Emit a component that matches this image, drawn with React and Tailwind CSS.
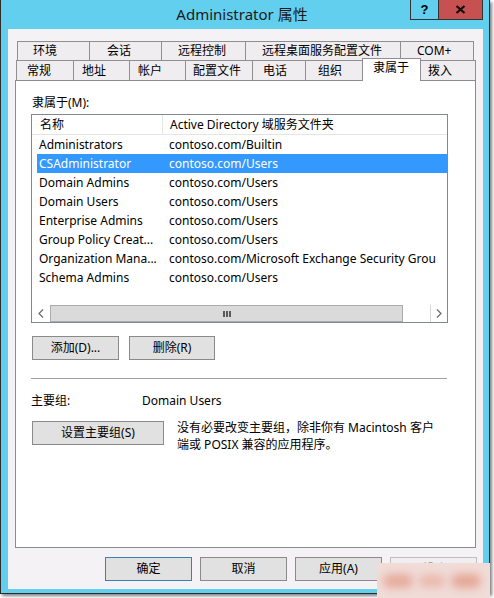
import React from 'react'

const rowOne = [
  { label: '环境', w: 'w-[72px]', pl: 'pl-[15px]' },
  { label: '会话', w: 'w-[72px]', pl: 'pl-[17px]' },
  { label: '远程控制', w: 'w-[84px]', pl: 'pl-[16px]' },
  { label: '远程桌面服务配置文件', w: 'w-[155px]', pl: 'pl-[16px]' },
  { label: 'COM+', w: 'w-[74px] border-r', pl: 'pl-[16px]' },
]

const rowTwo = [
  { label: '常规', w: 'w-[57px]', pl: 'pl-[10px]' },
  { label: '地址', w: 'w-[56px]', pl: 'pl-[8px]' },
  { label: '帐户', w: 'w-[56px]', pl: 'pl-[8px]' },
  { label: '配置文件', w: 'w-[67px]', pl: 'pl-[7px]' },
  { label: '电话', w: 'w-[53px]', pl: 'pl-[10px]' },
  { label: '组织', w: 'w-[57px]', pl: 'pl-[12px]' },
]

// folder column is cut off by the list edge in the dialog
const groups = [
  ['Administrators', 'contoso.com/Builtin'],
  ['CSAdministrator', 'contoso.com/Users'],
  ['Domain Admins', 'contoso.com/Users'],
  ['Domain Users', 'contoso.com/Users'],
  ['Enterprise Admins', 'contoso.com/Users'],
  ['Group Policy Creat...', 'contoso.com/Users'],
  ['Organization Mana...', 'contoso.com/Microsoft Exchange Security Grou'],
  ['Schema Admins', 'contoso.com/Users'],
]

function Btn({ children, className }) {
  return (
    <div className={'h-[24px] bg-[#e1e1e1] border flex items-center justify-center shrink-0 ' + className}>
      {children}
    </div>
  )
}

function Chevron({ dir }) {
  return (
    <svg width="6" height="9" viewBox="0 0 6 9">
      <path d={dir === 'left' ? 'M5 0.5 L1 4.5 L5 8.5' : 'M1 0.5 L5 4.5 L1 8.5'} fill="none" stroke="#6a6a6a" strokeWidth="1.2" />
    </svg>
  )
}

export default function App() {
  return (
    <div className="w-[494px] h-[598px] bg-white relative overflow-hidden font-['Noto_Sans','Noto_Sans_CJK_SC',sans-serif] text-[12px] text-black">
      <div className="w-[490px] h-[594px] bg-[#62cfee] border-x border-b border-[#2d2d2d] shadow-[2px_2px_3px_rgba(0,0,0,0.5)] flex flex-col">
        {/* title bar */}
        <div className="h-[29px] shrink-0 flex items-start">
          <div className="flex-1" />
          <div className="h-[29px] flex items-center text-[15px] text-[#1b1b1b] whitespace-nowrap">Administrator 属性</div>
          <div className="flex-1 flex justify-end pr-[6px]">
            <div className="w-[28px] h-[20px] border-l border-b border-[#333] flex items-center justify-center font-bold text-[13px] leading-none font-['Liberation_Sans',sans-serif]">?</div>
            <div className="w-[45px] h-[20px] bg-[#c75050] border-x border-b border-[#333] flex items-center justify-center">
              <svg width="11" height="9" viewBox="0 0 11 9">
                <path d="M1.5 1 L9.5 8 M9.5 1 L1.5 8" stroke="#111" strokeWidth="2.3" />
              </svg>
            </div>
          </div>
        </div>

        {/* client */}
        <div className="flex-1 ml-[7px] mr-[6px] mb-[4px] bg-[#f5f2f6] flex flex-col pl-[7px] pt-[12px]">
          {/* tabs */}
          <div className="flex ml-[2px] h-[19px]">
            {rowOne.map((t) => (
              <div key={t.label} className={'h-[19px] border-t border-l border-[#8f8f8f] bg-[#efedf0] leading-[18px] whitespace-nowrap ' + t.w + ' ' + t.pl}>
                {t.label}
              </div>
            ))}
          </div>
          <div className="flex ml-[1px] h-[20px] items-end">
            {rowTwo.map((t) => (
              <div key={t.label} className={'h-[20px] border-t border-l border-[#8f8f8f] bg-[#efedf0] leading-[19px] whitespace-nowrap ' + t.w + ' ' + t.pl}>
                {t.label}
              </div>
            ))}
            <div className="w-[59px] h-[23px] -mb-[1px] relative z-10 bg-white border-t border-x border-[#8f8f8f] pl-[10px] leading-[18px] whitespace-nowrap">隶属于</div>
            <div className="w-[55px] h-[20px] border-t border-r border-[#8f8f8f] bg-[#efedf0] pl-[7px] leading-[19px]">拨入</div>
          </div>

          {/* page */}
          <div className="w-[461px] h-[468px] border border-[#898c8f] bg-white pl-[15px] flex flex-col shrink-0">
            <div className="mt-[14px] ml-[1px] leading-[16px]">隶属于(M):</div>

            <div className="mt-[3px] w-[417px] h-[209px] border border-[#828790] flex flex-col overflow-hidden shrink-0">
              <div className="h-[20px] shrink-0 flex border-b border-[#e5e5e5] leading-[19px] whitespace-nowrap">
                <div className="w-[131px] pl-[8px] border-r border-[#e5e5e5] shrink-0">名称</div>
                <div className="pl-[7px]">Active Directory 域服务文件夹</div>
              </div>
              {groups.map(([name, folder], i) => (
                <div
                  key={name}
                  className={i === 1 ? 'ml-[5px] h-[19px] shrink-0 flex items-center bg-[#3399ff] text-white whitespace-nowrap' : 'ml-[5px] h-[19px] shrink-0 flex items-center whitespace-nowrap'}
                >
                  <div className="w-[132px] pl-[2px] shrink-0">{name}</div>
                  <div>{folder}</div>
                </div>
              ))}
              {/* horizontal scrollbar */}
              <div className="mt-auto h-[17px] shrink-0 flex">
                <div className="w-[18px] flex items-center justify-center shrink-0">
                  <Chevron dir="left" />
                </div>
                <div className="w-[353px] shrink-0 bg-[#dadada] border border-[#ababab] flex items-center justify-center gap-[1px]">
                  <div className="w-[2px] h-[6px] bg-[#5a5a5a]" />
                  <div className="w-[2px] h-[6px] bg-[#5a5a5a]" />
                  <div className="w-[2px] h-[6px] bg-[#5a5a5a]" />
                </div>
                <div className="flex-1" />
                <div className="w-[17px] border-l border-[#d6d6d6] flex items-center justify-center shrink-0">
                  <Chevron dir="right" />
                </div>
              </div>
            </div>

            <div className="mt-[13px] ml-[1px] flex gap-[10px]">
              <Btn className="w-[87px] border-[#8a8a8a]">添加(D)...</Btn>
              <Btn className="w-[86px] border-[#8a8a8a]">删除(R)</Btn>
            </div>

            <div className="mt-[18px] w-[416px] h-px bg-[#a0a0a0]" />

            <div className="mt-[14px] flex leading-[16px] whitespace-nowrap">
              <div className="w-[111px]">主要组:</div>
              <div>Domain Users</div>
            </div>

            <div className="mt-[12px] ml-[1px] flex items-start">
              <Btn className="w-[132px] border-[#8a8a8a]">设置主要组(S)</Btn>
              <div className="ml-[13px] -mt-[2px] leading-[17px] whitespace-nowrap">
                没有必要改变主要组，除非你有 Macintosh 客户
                <br />
                端或 POSIX 兼容的应用程序。
              </div>
            </div>
          </div>

          {/* dialog buttons */}
          <div className="mt-[9px] pr-[6px] flex justify-end gap-[8px]">
            <Btn className="w-[87px] border-[#3c7fb1]">确定</Btn>
            <Btn className="w-[87px] border-[#8a8a8a]">取消</Btn>
            <Btn className="w-[87px] border-[#8a8a8a]">应用(A)</Btn>
            <Btn className="w-[87px] border-[#bfbfbf] bg-[#f0eef1] text-[#9a9a9a]">帮助</Btn>
          </div>
        </div>
      </div>

      {/* blurred watermark over the corner */}
      <div className="absolute left-[377px] top-[563px] w-[113px] h-[35px] bg-[#f1dcd8] flex items-center gap-[6px] px-[6px] overflow-hidden">
        <div className="w-[30px] h-[14px] rounded-full bg-[#e6ab9c] blur-[4px]" />
        <div className="w-[26px] h-[12px] rounded-full bg-[#eab7aa] blur-[4px]" />
        <div className="w-[30px] h-[14px] rounded-full bg-[#e4a797] blur-[4px]" />
      </div>
    </div>
  )
}
